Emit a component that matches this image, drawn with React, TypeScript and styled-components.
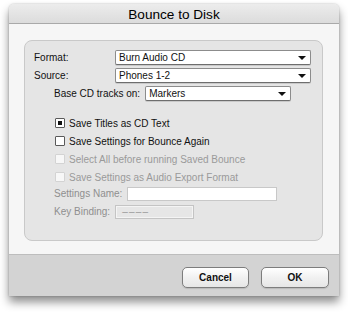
import React from 'react';
import styled, { createGlobalStyle } from 'styled-components';

const GlobalStyle = createGlobalStyle`
  html, body {
    margin: 0;
    padding: 0;
    background: #ffffff;
  }
  body {
    font-family: "Liberation Sans", Arial, sans-serif;
    font-size: 10px;
    color: #111;
  }
`;

const Page = styled.div`
  width: 348px;
  height: 312px;
  padding: 4px 0 0 9px;
  box-sizing: border-box;
`;

const Window = styled.div`
  width: 330px;
  height: 292px;
  display: flex;
  flex-direction: column;
  border-radius: 5px 5px 0 0;
  background: #f6f6f6;
  box-shadow: 0 6px 10px rgba(0, 0, 0, 0.45), 0 0 2px rgba(0, 0, 0, 0.25);
  overflow: hidden;
`;

const TitleBar = styled.div`
  height: 18px;
  flex: 0 0 18px;
  display: flex;
  align-items: center;
  justify-content: center;
  background: linear-gradient(#ececec, #dcdcdc);
  border-bottom: 1px solid #a9a9a9;
  font-size: 13.6px;
  color: #000;
  padding-top: 1px;
`;

const Content = styled.div`
  flex: 1;
  padding: 16px 16px 0 15px;
  border-bottom: 1px solid #bdbdbd;
`;

const Group = styled.div`
  height: 201px;
  box-sizing: border-box;
  background: #e5e5e5;
  border: 1px solid #c9c9c9;
  border-radius: 8px;
  padding: 9px 0 0 9px;
  display: flex;
  flex-direction: column;
`;

const FieldRow = styled.div<{ $indent?: number; $gap?: number }>`
  display: flex;
  align-items: center;
  height: 15px;
  padding-left: ${(p) => p.$indent ?? 0}px;
  margin-top: ${(p) => p.$gap ?? 0}px;
`;

const Label = styled.span<{ $width?: number; $dim?: boolean }>`
  width: ${(p) => (p.$width ? `${p.$width}px` : 'auto')};
  flex: 0 0 auto;
  color: ${(p) => (p.$dim ? '#8f8f8f' : '#111')};
  white-space: nowrap;
  margin-right: ${(p) => (p.$width ? 0 : 5)}px;
`;

const Popup = styled.div<{ $width: number }>`
  width: ${(p) => p.$width}px;
  height: 15px;
  box-sizing: border-box;
  background: #ffffff;
  border: 1px solid #8c8c8c;
  border-bottom-color: #6e6e6e;
  border-radius: 2px;
  box-shadow: 0 1px 0 rgba(0, 0, 0, 0.12);
  display: flex;
  align-items: center;
  justify-content: space-between;
  padding: 0 4px 0 3px;
  color: #111;
`;

const Arrow = styled.span`
  width: 0;
  height: 0;
  border-left: 4px solid transparent;
  border-right: 4px solid transparent;
  border-top: 4px solid #111;
`;

const CheckRow = styled.label<{ $disabled?: boolean; $gap?: number }>`
  display: flex;
  align-items: center;
  height: 14px;
  padding-left: 21px;
  margin-top: ${(p) => p.$gap ?? 4}px;
  color: ${(p) => (p.$disabled ? '#9a9a9a' : '#111')};
`;

const Box = styled.span<{ $disabled?: boolean; $checked?: boolean }>`
  width: 10px;
  height: 10px;
  box-sizing: border-box;
  margin-right: 4px;
  border: 1px solid ${(p) => (p.$disabled ? '#d3d3d3' : '#5a5a5a')};
  background: ${(p) => (p.$disabled ? '#f7f7f7' : '#ffffff')};
  border-radius: 1px;
  display: flex;
  align-items: center;
  justify-content: center;
  &::after {
    content: '';
    display: ${(p) => (p.$checked ? 'block' : 'none')};
    width: 4px;
    height: 4px;
    background: #111;
  }
`;

const TextInput = styled.div<{ $width: number; $disabled?: boolean }>`
  width: ${(p) => p.$width}px;
  height: 14px;
  box-sizing: border-box;
  border: 1px solid ${(p) => (p.$disabled ? '#c4c4c4' : '#c8c8c8')};
  background: ${(p) => (p.$disabled ? '#e6e6e6' : '#ffffff')};
  box-shadow: ${(p) => (p.$disabled ? 'inset 0 0 0 1px #f4f4f4' : 'none')};
  display: flex;
  align-items: center;
  padding-left: 6px;
  color: #9a9a9a;
  letter-spacing: 1.2px;
`;

const ButtonBar = styled.div`
  height: 41px;
  flex: 0 0 41px;
  background: #d3d3d3;
  display: flex;
  align-items: flex-start;
  justify-content: flex-end;
  padding: 12px 10px 0 0;
  box-sizing: border-box;
  gap: 12px;
`;

const Button = styled.button<{ $width: number }>`
  width: ${(p) => p.$width}px;
  height: 21px;
  border: 1px solid #7d7d7d;
  border-radius: 5px;
  background: linear-gradient(#ffffff, #f1f1f1 50%, #e6e6e6);
  box-shadow: 0 1px 1px rgba(0, 0, 0, 0.12);
  font-family: "Liberation Sans", Arial, sans-serif;
  font-weight: bold;
  font-size: 10px;
  color: #111;
  padding: 0;
`;

export default function App() {
  return (
    <>
      <GlobalStyle />
      <Page>
        <Window>
          <TitleBar>Bounce to Disk</TitleBar>
          <Content>
            <Group>
              <FieldRow>
                <Label $width={81}>Format:</Label>
                <Popup $width={196}>
                  <span>Burn Audio CD</span>
                  <Arrow />
                </Popup>
              </FieldRow>
              <FieldRow $gap={3}>
                <Label $width={81}>Source:</Label>
                <Popup $width={196}>
                  <span>Phones 1-2</span>
                  <Arrow />
                </Popup>
              </FieldRow>
              <FieldRow $gap={3} $indent={20}>
                <Label>Base CD tracks on:</Label>
                <Popup $width={146}>
                  <span>Markers</span>
                  <Arrow />
                </Popup>
              </FieldRow>
              <CheckRow $gap={15}>
                <Box $checked />
                Save Titles as CD Text
              </CheckRow>
              <CheckRow>
                <Box />
                Save Settings for Bounce Again
              </CheckRow>
              <CheckRow $disabled>
                <Box $disabled />
                Select All before running Saved Bounce
              </CheckRow>
              <CheckRow $disabled>
                <Box $disabled />
                Save Settings as Audio Export Format
              </CheckRow>
              <FieldRow $gap={2} $indent={20}>
                <Label $dim>Settings Name:</Label>
                <TextInput $width={150} />
              </FieldRow>
              <FieldRow $gap={3} $indent={20}>
                <Label $dim>Key Binding:</Label>
                <TextInput $width={79} $disabled>
                  ––––
                </TextInput>
              </FieldRow>
            </Group>
          </Content>
          <ButtonBar>
            <Button $width={67}>Cancel</Button>
            <Button $width={68}>OK</Button>
          </ButtonBar>
        </Window>
      </Page>
    </>
  );
}
